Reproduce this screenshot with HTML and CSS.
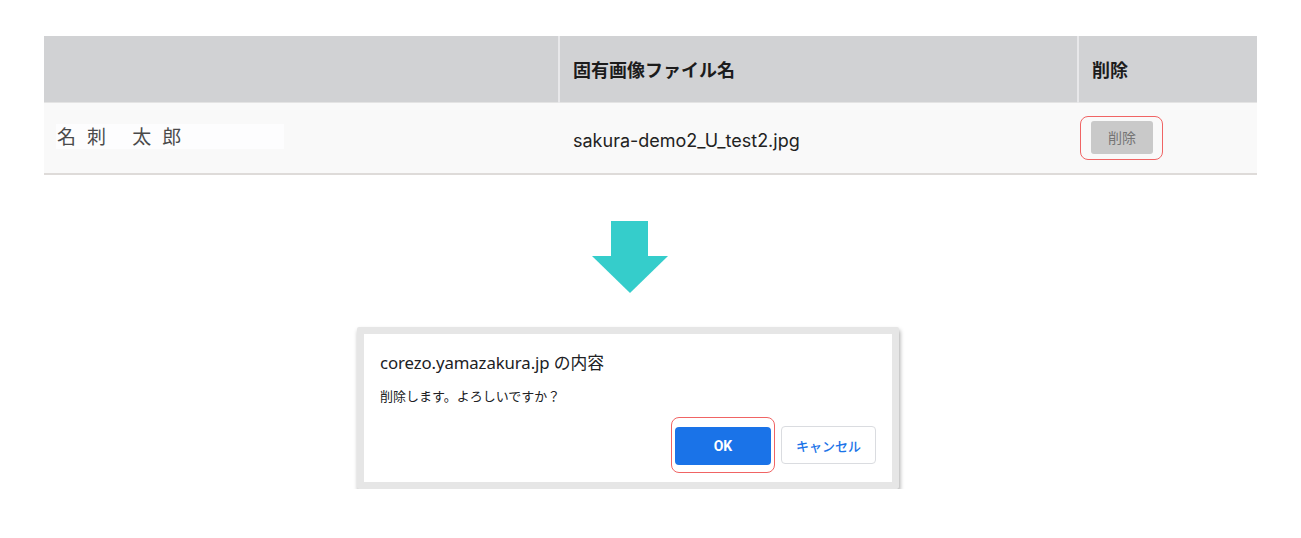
FILE: index.html
```html
<!DOCTYPE html>
<html lang="ja">
<head>
<meta charset="utf-8">
<link rel="stylesheet" href="styles.css">
</head>
<body>
<div class="page">
  <table class="files">
    <thead>
      <tr>
        <th class="c1"></th>
        <th class="c2">固有画像ファイル名</th>
        <th class="c3">削除</th>
      </tr>
    </thead>
    <tbody>
      <tr>
        <td class="c1"><span class="name">名刺 太郎</span></td>
        <td class="c2 fname">sakura-demo2_U_test2.jpg</td>
        <td class="c3"><span class="hl hl-del"><span class="del-btn">削除</span></span></td>
      </tr>
    </tbody>
  </table>

  <div class="arrow">
    <svg width="76" height="72" viewBox="0 0 76 72">
      <rect x="19" y="0" width="37" height="36" fill="#35cdcb"/>
      <polygon points="0,35 76,35 38,72" fill="#35cdcb"/>
    </svg>
  </div>

  <div class="dialog">
    <div class="dialog-inner">
      <div class="d-title">corezo.yamazakura.jp の内容</div>
      <div class="d-msg">削除します。よろしいですか？</div>
      <div class="d-actions">
        <span class="hl hl-ok"><button class="ok">OK</button></span>
        <button class="cancel">キャンセル</button>
      </div>
    </div>
  </div>
</div>
</body>
</html>
```

FILE: styles.css
```css
html, body {
  margin: 0;
  background: #ffffff;
}
.page {
  padding: 36px 44px 0 44px;
  font-family: Inter, "Noto Sans CJK JP", sans-serif;
}
.files {
  width: 1213px;
  border-collapse: collapse;
  table-layout: fixed;
}
.files th {
  background: #d1d2d4;
  height: 66px;
  text-align: left;
  font-family: "Noto Sans CJK JP", sans-serif;
  font-weight: 700;
  font-size: 18px;
  color: #1c1c1c;
  padding: 0 0 0 13px;
  border-bottom: 1px solid #e4e4e4;
}
.files th + th {
  border-left: 2px solid #e8e8ea;
}
.files th.c1 { width: 501px; }
.files th.c2 { width: 504px; }
.files td {
  background: #f9f9f9;
  height: 70px;
  padding: 0 0 0 14px;
  border-bottom: 2px solid #dedbd9;
  vertical-align: middle;
}
.files td.c1 { padding-left: 12px; }
.name {
  display: inline-block;
  width: 228px;
  height: 25px;
  line-height: 23px;
  background: #fdfdfe;
  font-family: "Noto Sans CJK JP", sans-serif;
  font-weight: 400;
  font-size: 19px;
  letter-spacing: 11px;
  color: #4a4a4a;
  padding-left: 1px;
  box-sizing: border-box;
  margin-top: -4px;
}
.files td.fname {
  font-family: Inter, sans-serif;
  font-size: 18px;
  color: #222;
  height: 66px;
  padding-top: 4px;
}
.files td.c3 { padding-left: 2px; }
.hl {
  display: inline-flex;
  border: 1px solid #f06464;
  border-radius: 8px;
}
.hl-del {
  padding: 4px 9px 5px 10px;
}
.del-btn {
  display: inline-block;
  width: 62px;
  height: 33px;
  line-height: 33px;
  text-align: center;
  background: #c9c9c9;
  border-radius: 3px;
  font-family: "Noto Sans CJK JP", sans-serif;
  font-size: 14px;
  color: #757575;
}
.arrow {
  margin-top: 46px;
  margin-left: 548px;
  height: 72px;
}
.arrow svg { display: block; }
.dialog {
  margin-top: 34px;
  margin-left: 313px;
  width: 542px;
  box-sizing: border-box;
  border: 7px solid #e6e6e6;
  border-radius: 2px;
  box-shadow: 1px 3px 4px rgba(0,0,0,0.35);
  background: #ffffff;
}
.dialog-inner {
  height: 148px;
  padding: 18px 16px 0 16px;
  box-sizing: border-box;
  font-family: "Noto Sans", "Noto Sans CJK JP", sans-serif;
}
.d-title {
  font-size: 16.8px;
  color: #202124;
  line-height: 22px;
  letter-spacing: -0.1px;
}
.d-msg {
  margin-top: 13px;
  font-size: 13px;
  color: #202124;
  line-height: 18px;
}
.d-actions {
  margin-top: 12px;
  display: flex;
  justify-content: flex-end;
  align-items: center;
  gap: 6px;
  padding-right: 0;
}
.hl-ok {
  padding: 9px 3px 7px 3px;
}
.ok {
  width: 96px;
  height: 38px;
  border: none;
  border-radius: 4px;
  background: #1a73e8;
  color: #ffffff;
  font-family: Roboto, sans-serif;
  font-weight: 700;
  font-size: 14px;
  padding: 0;
}
.cancel {
  width: 95px;
  height: 38px;
  border: 1px solid #dadce0;
  border-radius: 4px;
  background: #ffffff;
  color: #1a73e8;
  font-family: "Noto Sans CJK JP", sans-serif;
  font-weight: 500;
  font-size: 13px;
  padding: 0;
}
```
